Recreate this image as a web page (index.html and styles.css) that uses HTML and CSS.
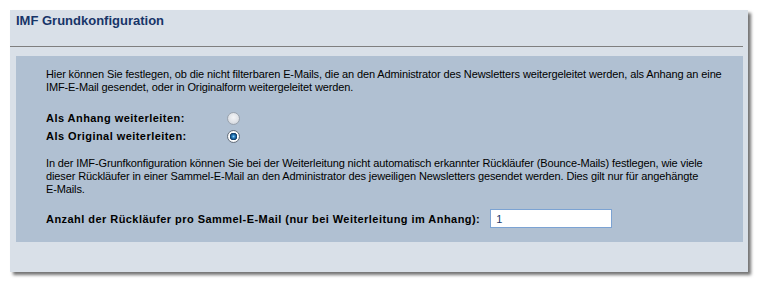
FILE: index.html
```html
<!DOCTYPE html>
<html lang="de">
<head>
    <meta charset="UTF-8">
    <title>IMF Grundkonfiguration</title>
    <link rel="stylesheet" href="styles.css">
</head>
<body>
    <div class="panel">
        <h1 class="panel-title">IMF Grundkonfiguration</h1>
        <hr class="divider">

        <div class="settings">
            <p class="note">Hier können Sie festlegen, ob die nicht filterbaren E-Mails, die an den Administrator des Newsletters weitergeleitet werden, als Anhang an eine IMF-E-Mail gesendet, oder in Originalform weitergeleitet werden.</p>

            <div class="options">
                <label class="option">
                    <span class="option-label">Als Anhang weiterleiten:</span>
                    <input type="radio" name="forward" value="attachment">
                </label>
                <label class="option">
                    <span class="option-label">Als Original weiterleiten:</span>
                    <input type="radio" name="forward" value="original" checked>
                </label>
            </div>

            <p class="note">In der IMF-Grunfkonfiguration können Sie bei der Weiterleitung nicht automatisch erkannter Rückläufer (Bounce-Mails) festlegen, wie viele dieser Rückläufer in einer Sammel-E-Mail an den Administrator des jeweiligen Newsletters gesendet werden. Dies gilt nur für angehängte <span class="nowrap">E-Mails.</span></p>

            <div class="field">
                <label for="bounceCount">Anzahl der Rückläufer pro Sammel-E-Mail (nur bei Weiterleitung im Anhang):</label>
                <input type="text" id="bounceCount" value="1">
            </div>
        </div>
    </div>
</body>
</html>
```

FILE: styles.css
```css
body {
    font-family: 'Liberation Sans', Arial, sans-serif;
    font-size: 11px;
    color: #000000;
    background-color: #ffffff;
    margin: 0;
    padding: 10px;
}

/* Outer panel */
.panel {
    width: 733px;
    height: 262px;
    background-color: #d9e0e8;
    padding-right: 5px;
    box-shadow: 3px 3px 3px rgba(0, 0, 0, 0.55);
    display: flex;
    flex-direction: column;
}

.panel-title {
    margin: 0;
    padding: 3px 6px 0;
    font-size: 13px;
    line-height: 15px;
    color: #173568;
}

.divider {
    margin: 18px 0 0;
    border: none;
    border-top: 1px solid #7f7f7f;
    height: 0;
}

/* Inner settings box */
.settings {
    margin: 9px 0 0 6px;
    padding: 12px 12px 14px 30px;
    background-color: #b0c0d2;
    display: flex;
    flex-direction: column;
}

.note {
    margin: 0;
    line-height: 13px;
    letter-spacing: -0.12px;
}

.nowrap {
    white-space: nowrap;
}

.options {
    display: flex;
    flex-direction: column;
    margin: 15px 0 12px;
}

.option {
    display: flex;
    align-items: center;
    height: 18px;
    font-weight: bold;
    letter-spacing: 0.45px;
}

.option-label {
    width: 181px;
}

/* Radio buttons */
.option input {
    appearance: none;
    margin: 0;
    width: 13px;
    height: 13px;
    border-radius: 50%;
    border: 1px solid #9aa3ae;
    background: radial-gradient(circle at 50% 40%, #f4f5f7 0%, #e0e3e8 55%, #c3c9d1 100%);
}

.option input:checked {
    border-color: #66707d;
    background: radial-gradient(circle, #8fd0f5 0, #2a7fc0 1.5px, #10497f 3px, #0a2f55 3.5px, #ffffff 4px, #dfe3e8 100%);
}

.field {
    display: flex;
    align-items: center;
    margin-top: 13px;
    font-weight: bold;
}

.field label {
    margin-right: 10px;
    letter-spacing: 0.45px;
}

.field input {
    width: 122px;
    height: 19px;
    box-sizing: border-box;
    border: 1px solid #7ca3d3;
    padding: 0 5px;
    font-family: 'Liberation Sans', Arial, sans-serif;
    font-size: 11px;
    color: #1d3b6c;
    background-color: #ffffff;
}
```
